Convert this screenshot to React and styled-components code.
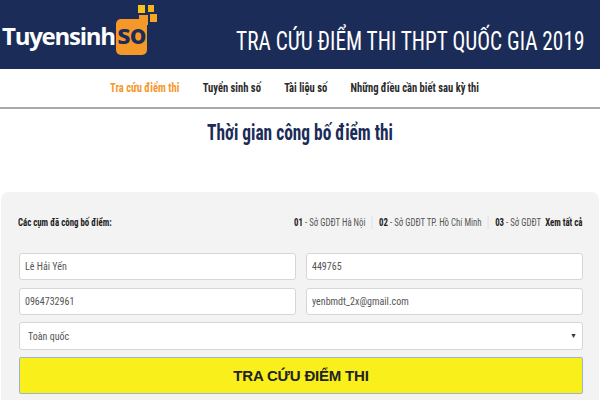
import styled, { createGlobalStyle } from 'styled-components';

const GlobalStyle = createGlobalStyle`
  html, body {
    margin: 0;
    padding: 0;
    background: #fff;
    overflow: hidden;
  }
  body {
    font-family: "Roboto", sans-serif;
    font-stretch: 75%;
  }
`;

const Page = styled.main`
  width: 600px;
  height: 400px;
  overflow: hidden;
`;

const Banner = styled.header`
  height: 69px;
  background: #1b2c58;
  display: flex;
  align-items: center;
  justify-content: space-between;
  padding: 0 16px 0 2px;
`;

const Logo = styled.div`
  display: flex;
  align-items: flex-end;
  height: 58px;
  margin-top: 2px;
`;

const LogoWord = styled.span`
  font-family: "Open Sans", sans-serif;
  font-stretch: 100%;
  font-weight: 700;
  font-size: 24px;
  line-height: 30px;
  letter-spacing: -1.25px;
  color: #fff;
  margin-bottom: 14px;
`;

const LogoBadge = styled.div`
  position: relative;
  width: 31px;
  height: 36px;
  margin-left: 1px;
  background: #f5982a;
  border-radius: 5px;
  display: flex;
  align-items: center;
  justify-content: center;
  margin-bottom: 10px;
`;

const LogoBadgeText = styled.span`
  font-family: "Open Sans", sans-serif;
  font-stretch: 100%;
  font-weight: 700;
  font-size: 27px;
  line-height: 24px;
  letter-spacing: -1px;
  color: #1b2c58;
  margin-bottom: 6px;
`;

const LogoDots = styled.svg`
  position: absolute;
  left: 22px;
  top: -14px;
`;

const BannerTitle = styled.h1`
  margin: 14px 0 0;
  font-weight: 400;
  font-size: 25px;
  color: #fff;
  white-space: nowrap;
  transform: scaleX(0.853);
  transform-origin: right center;
`;

const Nav = styled.nav`
  height: 38px;
  border-bottom: 2px solid #a9a9a9;
  display: flex;
  align-items: center;
  padding-left: 110px;
`;

const NavList = styled.div`
  display: flex;
  gap: 26.5px;
  transform: scaleX(0.88);
  transform-origin: left center;
`;

const NavItem = styled.a`
  font-weight: 700;
  font-size: 12px;
  color: ${(props) => (props.$active ? '#f5982a' : '#2b2b2b')};
  white-space: nowrap;
`;

const Heading = styled.h2`
  margin: 0;
  height: 83px;
  padding-top: 11px;
  box-sizing: border-box;
  text-align: center;
  font-weight: 700;
  font-size: 22px;
  line-height: 26px;
  color: #1b2c58;
  transform: scaleX(0.79);
`;

const Panel = styled.section`
  margin: 0 1px;
  height: 220px;
  background: #f3f3f3;
  border-radius: 7px 7px 0 0;
  padding: 0 16px 0 18px;
`;

const ClusterRow = styled.div`
  height: 61px;
  display: flex;
  align-items: center;
  justify-content: space-between;
`;

const ClusterLabel = styled.span`
  font-weight: 700;
  font-size: 10px;
  color: #222;
  margin-left: -1px;
  transform: scaleX(0.88);
  transform-origin: left center;
`;

const ClusterList = styled.div`
  display: flex;
  align-items: center;
  margin-right: 1px;
  font-size: 11px;
  color: #555;
  transform: scaleX(0.8);
  transform-origin: right center;
`;

const Cluster = styled.span`
  padding: 0 8px;
  border-right: 1px solid ${(props) => (props.$last ? 'transparent' : '#ddd')};
  b {
    color: #222;
  }
`;

const SeeAll = styled.a`
  font-weight: 700;
  color: #222;
  margin-left: -4px;
`;

const FieldGrid = styled.div`
  display: grid;
  grid-template-columns: 1fr 1fr;
  gap: 8px 10px;
`;

const Field = styled.div`
  height: 25px;
  background: #fff;
  border: 1px solid #d6d6d6;
  border-radius: 3px;
  display: flex;
  align-items: center;
  padding-left: 5px;
  font-size: 10px;
  color: #555;
`;

const SelectBox = styled(Field)`
  height: 26px;
  margin-top: 7px;
  padding: 0 5px 0 8px;
  justify-content: space-between;
`;

const Caret = styled.span`
  font-size: 7px;
  color: #333;
`;

const SearchButton = styled.button`
  display: block;
  width: 100%;
  height: 37px;
  margin-top: 7px;
  background: #f8ef1b;
  border: 1px solid #9db4cf;
  border-radius: 2px;
  font-family: "Liberation Sans", sans-serif;
  font-weight: 700;
  font-size: 15px;
  letter-spacing: -0.2px;
  color: #222;
`;

export default function App() {
  return (
    <Page>
      <GlobalStyle />
      <Banner>
        <Logo>
          <LogoWord>Tuyensinh</LogoWord>
          <LogoBadge>
            <LogoBadgeText>so</LogoBadgeText>
            <LogoDots width="20" height="20" viewBox="0 0 20 20">
              <rect x="0" y="0" width="7" height="8" fill="#f9c31a" />
              <rect x="10" y="0" width="6" height="7" fill="#f5b51a" />
              <rect x="1" y="10" width="9" height="10" fill="#f5982a" />
              <rect x="12" y="9" width="7" height="8" fill="#f5a623" />
            </LogoDots>
          </LogoBadge>
        </Logo>
        <BannerTitle>TRA CỨU ĐIỂM THI THPT QUỐC GIA 2019</BannerTitle>
      </Banner>
      <Nav>
        <NavList>
          <NavItem $active>Tra cứu điểm thi</NavItem>
          <NavItem>Tuyển sinh số</NavItem>
          <NavItem>Tài liệu số</NavItem>
          <NavItem>Những điều cần biết sau kỳ thi</NavItem>
        </NavList>
      </Nav>
      <Heading>Thời gian công bố điểm thi</Heading>
      <Panel>
        <ClusterRow>
          <ClusterLabel>Các cụm đã công bố điểm:</ClusterLabel>
          <ClusterList>
            <Cluster><b>01</b> - Sở GDĐT Hà Nội</Cluster>
            <Cluster><b>02</b> - Sở GDĐT TP. Hồ Chí Minh</Cluster>
            <Cluster $last><b>03</b> - Sở GDĐT</Cluster>
            <SeeAll>Xem tất cả</SeeAll>
          </ClusterList>
        </ClusterRow>
        <FieldGrid>
          <Field>Lê Hải Yến</Field>
          <Field>449765</Field>
          <Field>0964732961</Field>
          <Field>yenbmdt_2x@gmail.com</Field>
        </FieldGrid>
        <SelectBox>
          Toàn quốc
          <Caret>▼</Caret>
        </SelectBox>
        <SearchButton>TRA CỨU ĐIỂM THI</SearchButton>
      </Panel>
    </Page>
  );
}
